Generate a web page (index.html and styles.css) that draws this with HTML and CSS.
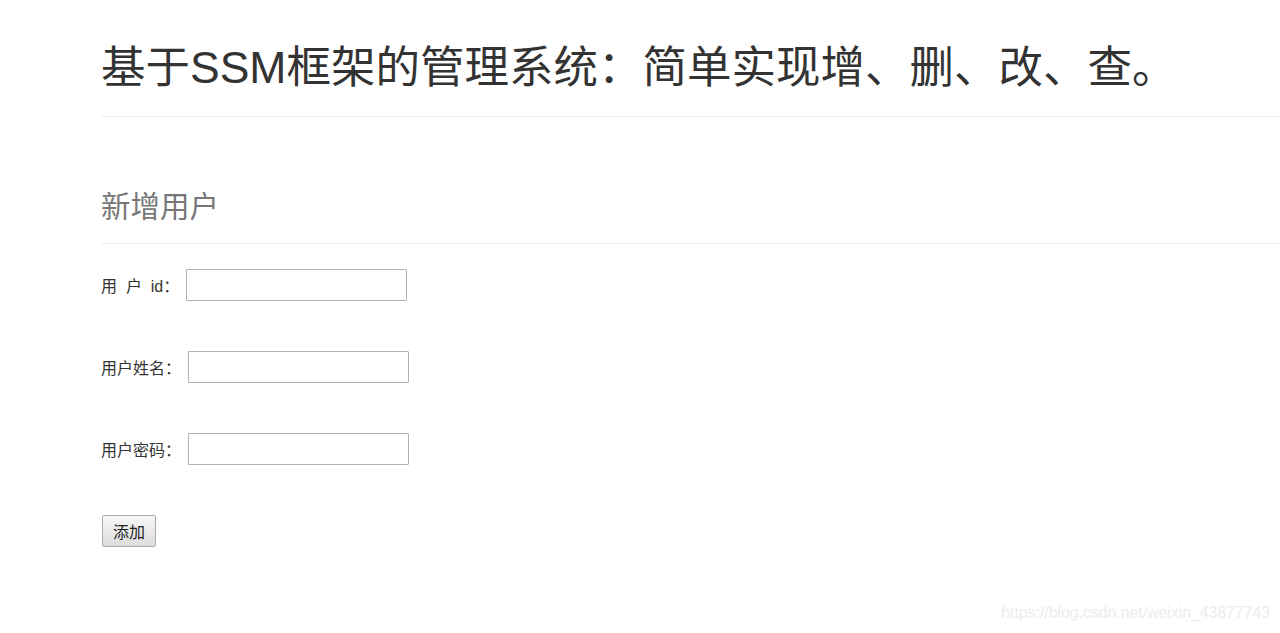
FILE: index.html
```html
<!DOCTYPE html>
<html lang="zh">
<head>
<meta charset="utf-8">
<title>新增用户</title>
<link rel="stylesheet" href="styles.css">
</head>
<body>
<div class="page">
  <div class="page-header">
    <h1 class="title">基于SSM框架的管理系统：简单实现增、删、改、查。</h1>
  </div>
  <div class="section-header">
    <h2 class="subtitle">新增用户</h2>
  </div>
  <form class="form">
    <div class="row"><label class="label">用&nbsp;&nbsp;户&nbsp;&nbsp;id：</label><input class="field" type="text"></div>
    <div class="row"><label class="label">用户姓名：</label><input class="field" type="text"></div>
    <div class="row"><label class="label">用户密码：</label><input class="field" type="password"></div>
    <div class="row"><button class="btn" type="button">添加</button></div>
  </form>
</div>
<div class="watermark">https://blog.csdn.net/weixin_43877743</div>
</body>
</html>
```
FILE: styles.css
```css
html, body {
  margin: 0;
  padding: 0;
  background: #ffffff;
  font-family: "Liberation Sans", "Noto Sans CJK SC", sans-serif;
  color: #333333;
  overflow: hidden;
}
.page {
  padding-left: 101px;
}
.page-header {
  padding-top: 40px;
  padding-bottom: 20px;
  border-bottom: 1px solid #eeeeee;
}
.title {
  margin: 0;
  font-size: 44.5px;
  font-weight: 400;
  line-height: 56px;
  color: #333333;
  white-space: nowrap;
}
.section-header {
  margin-top: 70px;
  padding-bottom: 16px;
  border-bottom: 1px solid #eeeeee;
}
.subtitle {
  margin: 0;
  font-size: 29.5px;
  font-weight: 400;
  line-height: 40px;
  color: #777777;
}
.form {
  display: flex;
  flex-direction: column;
  gap: 50px;
  padding-top: 25px;
}
.row {
  display: flex;
  align-items: center;
  height: 32px;
}
.label {
  font-size: 16px;
  color: #333333;
  margin-right: 7px;
}
.field {
  box-sizing: border-box;
  width: 221px;
  height: 32px;
  border: 1px solid #b0b0b0;
  border-radius: 1px;
  padding: 2px 4px;
  font-size: 15px;
}
.btn {
  box-sizing: border-box;
  height: 32px;
  padding: 0 10px;
  margin-left: 1px;
  font-family: "Liberation Sans", "Noto Sans CJK SC", sans-serif;
  font-size: 16px;
  color: #222;
  border: 1px solid #adadad;
  border-radius: 2px;
  background: linear-gradient(#f6f6f6, #dddddd);
}
.watermark {
  position: absolute;
  right: 10px;
  bottom: 11px;
  font-size: 15.8px;
  color: #ececec;
}
```
